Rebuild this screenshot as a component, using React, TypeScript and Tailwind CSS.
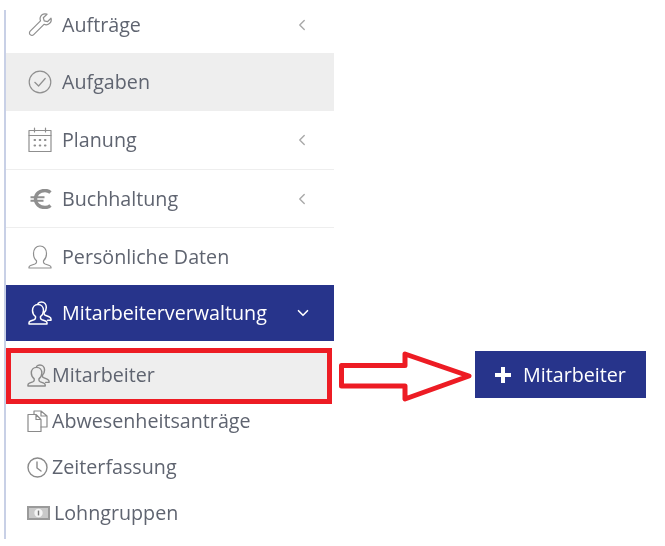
import { ChevronDown, ChevronLeft } from 'lucide-react'
import type { ReactNode } from 'react'

const stroke = { fill: 'none', stroke: 'currentColor', strokeWidth: 1.2, strokeLinecap: 'round', strokeLinejoin: 'round' } as const

function WrenchIcon() {
  return (
    <svg width="25" height="25" viewBox="0 0 25 25" {...stroke}>
      <path d="M23 5.200l-3.600 3.500-3.200-.8-.9-3.200L19 1.200c-2.600-.7-5.300.2-6.400 2.400-.7 1.400-.6 3-.1 4.200L2.200 18.100c-1 1-1 2.600 0 3.500s2.500 1 3.500 0l10.300-10.300c1.300.6 2.900.7 4.300 0 2.300-1.100 3.400-3.500 2.700-6.100z" />
    </svg>
  )
}

function CheckCircleIcon() {
  return (
    <svg width="24" height="24" viewBox="0 0 24 24" {...stroke}>
      <circle cx="12" cy="12" r="10.800" />
      <path d="M6.800 12.300l3.800 3.700 6.600-7.500" />
    </svg>
  )
}

function CalendarIcon() {
  return (
    <svg width="24" height="26" viewBox="0 0 24 26" {...stroke}>
      <rect x="1" y="3.500" width="22" height="21" />
      <path d="M1 8.500h22M6.500 1v4M17.500 1v4" />
      <path d="M6.500 13h.6M11.700 13h.6M16.900 13h.6M6.500 18.500h.6M11.700 18.500h.6M16.900 18.500h.6" strokeWidth="2" />
    </svg>
  )
}

function EuroIcon() {
  return (
    <svg width="22" height="20" viewBox="0 0 22 20" fill="none" stroke="currentColor" className="ml-[2px]">
      <path d="M20.500 3.500C18.800 2 17 1.500 15 1.500 9.500 1.500 5.500 5 5.500 10s4 8.500 9.500 8.500c2 0 3.800-.5 5.500-2" strokeWidth="3.400" />
      <path d="M.5 8.300h14M.5 11.800h13" strokeWidth="2" />
    </svg>
  )
}

function UserIcon() {
  return (
    <svg width="24" height="24" viewBox="0 0 24 24" {...stroke}>
      <path d="M8.500 15.800v1.500c0 .8-.6 1.300-1.600 1.700l-4.300 1.500C1.500 20.900 1 21.500 1 22.300V23h22v-.7c0-.8-.5-1.400-1.600-1.800L17.100 19c-1-.4-1.600-.9-1.600-1.700v-1.500c1.800-1.600 3-4.300 3-7.300C18.500 4 16 1 12 1S5.500 4 5.500 8.500c0 3 1.200 5.700 3 7.300z" />
    </svg>
  )
}

function UsersIcon({ size = 24 }: { size?: number }) {
  return (
    <svg width={size} height={size} viewBox="0 0 24 24" {...stroke} strokeWidth={1.5}>
      <path d="M7.500 15.500V17c0 .8-.5 1.300-1.500 1.700L2.500 20C1.500 20.400 1 21 1 21.800V23h18v-1.200c0-.8-.5-1.400-1.500-1.800L14 18.700c-1-.4-1.500-.9-1.500-1.700v-1.500c1.800-1.400 3-3.500 3-6C15.500 6 13.300 3.500 10 3.500S4.500 6 4.500 9.500c0 2.500 1.200 4.600 3 6z" />
      <path d="M10 2.500C10.800 1.500 12 1 13.500 1c2.800 0 4.800 2.200 4.800 5.300 0 2.200-.8 4.200-2.200 5.500v1c0 .7.4 1.100 1.200 1.500l3.700 1.500c1.300.5 2 1.200 2 2.200v1.200h-3.500" />
    </svg>
  )
}

function DocsIcon() {
  return (
    <svg width="21" height="22" viewBox="0 0 21 22" {...stroke}>
      <path d="M1 4.500h8l5 5v12H1zM9 4.500v5h5" />
      <path d="M7 4.500V1h7l6 5v11h-6M14 1v5h6" />
    </svg>
  )
}

function ClockIcon() {
  return (
    <svg width="21" height="21" viewBox="0 0 21 21" {...stroke} strokeWidth={1.4}>
      <circle cx="10.500" cy="10.500" r="9.500" />
      <path d="M10 5v6l4 3" />
    </svg>
  )
}

function MoneyIcon() {
  return (
    <svg width="23" height="14" viewBox="0 0 23 14">
      <rect width="23" height="14" fill="#9a9a9a" />
      <rect x="2" y="2" width="19" height="10" fill="#c9c9c9" />
      <circle cx="11.500" cy="7" r="4.200" fill="#f4f4f4" />
      <rect x="10.800" y="4.600" width="1.400" height="4.800" fill="#777777" />
    </svg>
  )
}

function MainItem({
  icon,
  label,
  chevron,
  className,
}: {
  icon: ReactNode
  label: string
  chevron?: boolean
  className: string
}) {
  return (
    <div className={`flex items-center pl-[22px] pr-[23px] ${className}`}>
      <span className="w-[34px] shrink-0 text-[#8f8f8f]">{icon}</span>
      <span className="flex-1 text-[19.7px] text-[#5f6470]">{label}</span>
      {chevron && <ChevronLeft size={18} strokeWidth={1.800} className="text-[#a8a8a8]" />}
    </div>
  )
}

function SubItem({ icon, label, gap }: { icon: ReactNode; label: string; gap: string }) {
  return (
    <div className={`flex h-[46px] items-center pl-[21px] ${gap}`}>
      <span className="shrink-0 text-[#8a8a8a]">{icon}</span>
      <span className="text-[19.7px] text-[#5f6470]">{label}</span>
    </div>
  )
}

export default function App() {
  return (
    <div className="relative flex h-[546px] w-[665px] overflow-hidden bg-white font-['Open_Sans',sans-serif] blur-[0.35px]">
      {/* sidebar rail */}
      <div className="absolute top-[10px] bottom-[7px] left-[4px] w-[2px] bg-[#c8d0e6]" />

      <div className="ml-[6px] w-[328px] shrink-0">
        <MainItem icon={<WrenchIcon />} label="Aufträge" chevron className="h-[53px] pb-[3px]" />
        <MainItem icon={<CheckCircleIcon />} label="Aufgaben" className="h-[58px] bg-[#eeeeee]" />
        <MainItem icon={<CalendarIcon />} label="Planung" chevron className="h-[59px] border-b border-[#eeeeee]" />
        <MainItem icon={<EuroIcon />} label="Buchhaltung" chevron className="h-[58px] border-b border-[#eeeeee]" />
        <MainItem icon={<UserIcon />} label="Persönliche Daten" className="h-[57px]" />

        <div className="flex h-[56px] items-center bg-[#27348b] pr-[22px] pl-[22px] text-white">
          <span className="w-[34px] shrink-0">
            <UsersIcon />
          </span>
          <span className="flex-1 text-[19.7px]">Mitarbeiterverwaltung</span>
          <ChevronDown size={18} strokeWidth={2.200} />
        </div>

        {/* sub menu */}
        <div className="mt-[7px] flex h-[56px] w-[326px] items-center gap-[2px] border-[5px] border-[#ed1c24] bg-[#eeeeee] pb-[2px] pl-[16px]">
          <span className="text-[#8a8a8a]">
            <UsersIcon size={23} />
          </span>
          <span className="text-[19.7px] text-[#5f6470]">Mitarbeiter</span>
        </div>
        <div className="-mt-[6px]">
          <SubItem icon={<DocsIcon />} label="Abwesenheitsanträge" gap="gap-[4px]" />
          <SubItem icon={<ClockIcon />} label="Zeiterfassung" gap="gap-[4px]" />
          <SubItem icon={<MoneyIcon />} label="Lohngruppen" gap="gap-[4px]" />
        </div>
      </div>

      <div className="mt-[351px] ml-[5px] flex h-[52px] items-start">
        <svg width="134" height="52" viewBox="0 0 134 52" className="shrink-0">
          <path
            d="M2.500 14.500H66V3l64 22-64 23V35H2.500z"
            fill="none"
            stroke="#ed1c24"
            strokeWidth="5"
            strokeLinejoin="round"
          />
        </svg>
        <div className="ml-[2px] flex h-[47px] w-[171px] items-center gap-[12px] bg-[#27348b] pl-[20px] text-white">
          <svg width="16" height="16" viewBox="0 0 16 16" fill="currentColor">
            <path d="M6 0h4v6h6v4h-6v6H6v-6H0V6h6z" />
          </svg>
          <span className="text-[19.7px]">Mitarbeiter</span>
        </div>
      </div>
    </div>
  )
}
